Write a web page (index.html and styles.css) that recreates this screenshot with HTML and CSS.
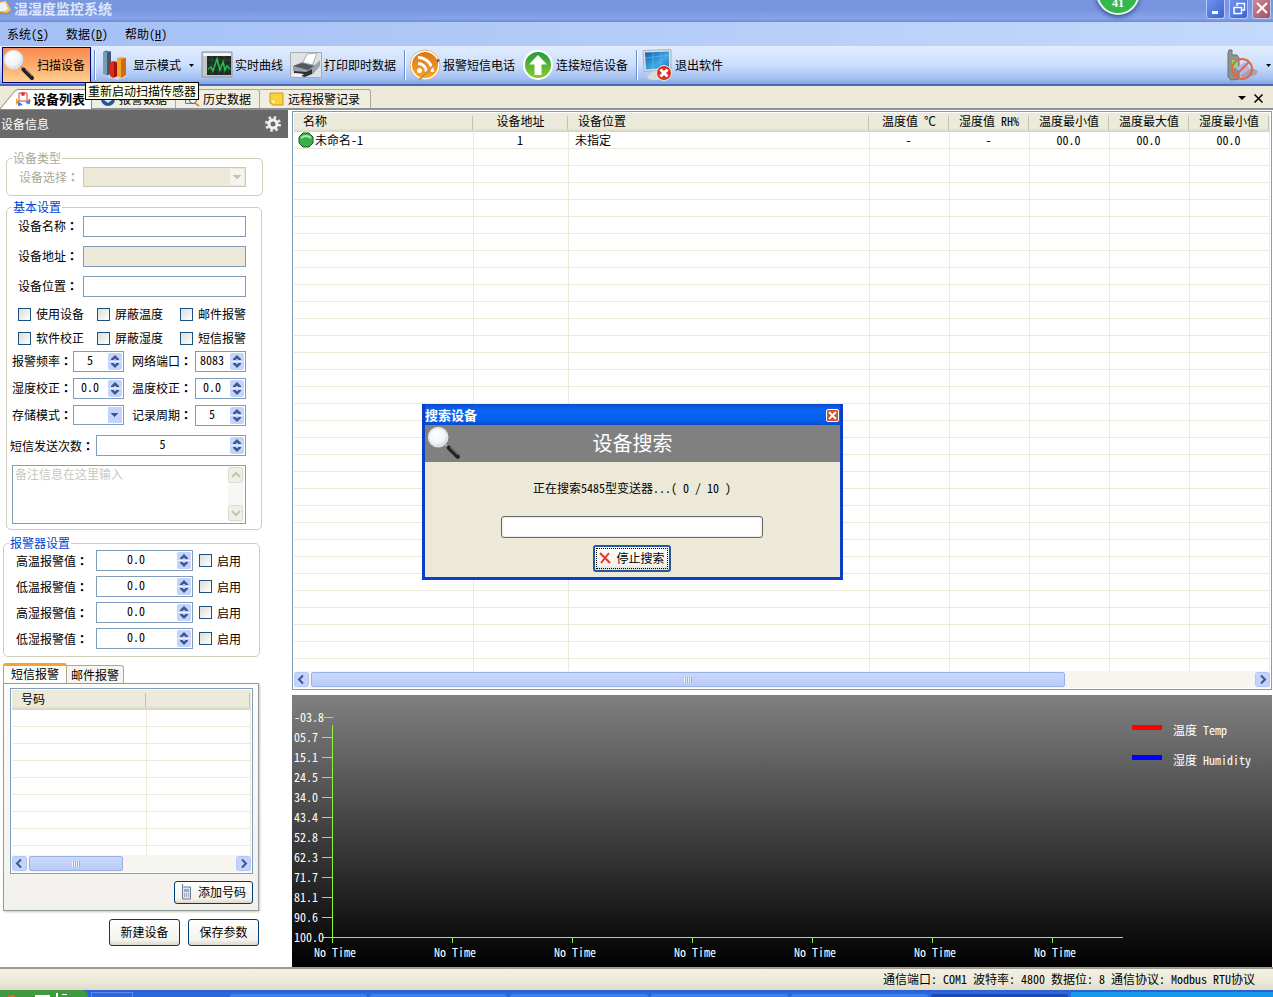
FILE: index.html
```html
<!DOCTYPE html>
<html lang="zh-CN">
<head>
<meta charset="utf-8">
<title>温湿度监控系统</title>
<link rel="stylesheet" href="styles.css">
</head>
<body>
<svg class="defs" aria-hidden="true">
  <defs>
    <radialGradient id="lens" cx=".4" cy=".35" r=".7"><stop offset="0" stop-color="#fff"/><stop offset=".7" stop-color="#f0f3f6"/><stop offset="1" stop-color="#c5cdd6"/></radialGradient>
    <linearGradient id="rssG" x2="0" y2="1"><stop offset="0" stop-color="#d9761a"/><stop offset="1" stop-color="#ffa51e"/></linearGradient>
    <linearGradient id="upG" x2="0" y2="1"><stop offset="0" stop-color="#1c9a3c"/><stop offset="1" stop-color="#8ccf2a"/></linearGradient>
    <linearGradient id="scrG" x2="1" y2="1"><stop offset="0" stop-color="#0d5fae"/><stop offset=".6" stop-color="#3fa9e6"/><stop offset="1" stop-color="#1b74bf"/></linearGradient>
    <symbol id="magnifier" viewBox="0 0 32 32">
      <path d="M17 17l4 4" stroke="#999" stroke-width="2"/>
      <path d="M20.500 20.500l8.500 8.500" stroke="#222" stroke-width="4" stroke-linecap="round"/>
      <path d="M22 20l7 7" stroke="#777" stroke-width="1"/>
      <circle cx="10.500" cy="10.500" r="9" fill="url(#lens)" stroke="#dfe3e8" stroke-width="1.500"/>
    </symbol>
    <symbol id="spin" viewBox="0 0 14 17">
      <rect width="14" height="17" rx="2" fill="#c3d3fb"/>
      <path d="M0 8.500h14" stroke="#e6edfd"/>
      <path d="M3 7V6l4-4 4 4v1H8.500L7 5.500 5.500 7zM3 10v1l4 4 4-4v-1H8.500L7 11.500 5.500 10z" fill="#3d5690"/>
    </symbol>
    <symbol id="left" viewBox="0 0 15 15"><rect x=".5" y=".5" width="14" height="14" rx="2" fill="#c3d3fb" stroke="#b4c6f5"/><path d="M9 3.500L5 7.500l4 4" fill="none" stroke="#3d5690" stroke-width="2"/></symbol>
    <symbol id="right" viewBox="0 0 15 15"><rect x=".5" y=".5" width="14" height="14" rx="2" fill="#c3d3fb" stroke="#b4c6f5"/><path d="M6 3.500l4 4-4 4" fill="none" stroke="#3d5690" stroke-width="2"/></symbol>
  </defs>
</svg>

<header class="titlebar">
  <svg class="app-icon" width="12" height="16" viewBox="0 0 12 16"><path d="M0 2l6-1 5 9-4 3H0z" fill="#f5c842"/><path d="M0 3l5-1 3 7-3 2H0z" fill="#e8f4ff"/><path d="M0 12l8 1 2-2v3H0z" fill="#c98a1c"/></svg>
  <h1>温湿度监控系统</h1>
  <span class="badge">41</span>
  <div class="win-buttons">
    <button aria-label="最小化"><svg width="18" height="18"><path d="M5 12.500h6" stroke="#fff" stroke-width="3"/></svg></button>
    <button aria-label="还原"><svg width="18" height="18"><path d="M7 6V3.500h7.500V10H12M4 7.500h7.500v6H4z" fill="none" stroke="#fff" stroke-width="1.500"/></svg></button>
    <button class="close" aria-label="关闭"><svg width="18" height="18"><path d="M4 3l10 10M14 3L4 13" stroke="#fff" stroke-width="2"/></svg></button>
  </div>
</header>

<nav class="menubar">
  <button>系统(<u>S</u>)</button>
  <button>数据(<u>D</u>)</button>
  <button>帮助(<u>H</u>)</button>
</nav>

<div class="toolbar">
  <button class="tool scan"><svg width="32" height="32"><use href="#magnifier"/></svg>扫描设备</button>
  <span class="sep"></span>
  <button class="tool"><svg width="32" height="32" viewBox="0 0 32 32">
    <path d="M4 26l14 5 11-4-12-6z" fill="#d5d8dc"/>
    <path d="M4 3l3-1.500 5 1v22l-4 2-4-2z" fill="#5d7b99"/><path d="M8 4l4-1.500v22l-4 2z" fill="#3f5873"/><path d="M4 3l4 1v22l-4-2z" fill="#7c9ab6"/>
    <path d="M11 13l4-1 3 1v14l-4 2-3-2z" fill="#e02818"/><path d="M15 14l3-1v14l-3 1.500z" fill="#9c1410"/>
    <path d="M18 9l4-1 5 1v17l-5 3-4-2z" fill="#f7a62c"/><path d="M22 10l5-1v17l-5 3z" fill="#cf6a16"/></svg>显示模式<svg class="drop" width="5" height="3"><path d="M0 0h5L2.500 3z"/></svg></button>
  <button class="tool"><svg width="32" height="32" viewBox="0 0 32 32">
    <path d="M1 3h30v25H1z" fill="#c3c6c9" stroke="#8e949a"/><path d="M2 4h28v3H2z" fill="#f4f4f4"/><path d="M6 7h24v19H6z" fill="#1f2b25"/>
    <path d="M6 11h24M6 16h24M6 21h24M11 7v19M17 7v19M23 7v19" stroke="#2d4a3a"/><path d="M7 20l3-2 2 4 4-12 3 11 3-8 2 8 2-4 3 3" fill="none" stroke="#28c04c" stroke-width="1.500"/></svg>实时曲线</button>
  <button class="tool"><svg width="32" height="32" viewBox="0 0 32 32">
    <path d="M.5 3.500h31v25H.5z" fill="#dfe3e6" stroke="#a7adb3"/><path d="M17 5l10-1-5 13-10-2z" fill="#fff" stroke="#aaa"/><path d="M3 17l9-4 13 3 5-5v6l-7 8-20-3z" fill="#9aa1a8"/><path d="M3 17l9-3 12 3-6 4z" fill="#53595f"/><path d="M4 22l12 1 6-3v5l-7 3-11-3z" fill="#2e3338"/><path d="M5 24l9 1-4 3-8-2z" fill="#fafafa"/></svg>打印即时数据</button>
  <span class="sep"></span>
  <button class="tool"><svg width="32" height="32" viewBox="0 0 32 32">
    <circle cx="16" cy="16" r="14" fill="url(#rssG)" stroke="#fff" stroke-width="2"/><circle cx="16" cy="16" r="15" fill="none" stroke="#dcb48c"/>
    <circle cx="10.500" cy="21.500" r="2.500" fill="#fff"/><path d="M9 14.500a8.500 8.500 0 0 1 8.500 8.500M9 8.500A14.500 14.500 0 0 1 23.500 23" fill="none" stroke="#fff" stroke-width="3"/><path d="M30 11L13 28l-3 3" stroke="#c98f58" stroke-width="2"/><path d="M28 10l3 1-3 3z" fill="#b33"/></svg>报警短信电话</button>
  <button class="tool"><svg width="32" height="32" viewBox="0 0 32 32">
    <circle cx="16" cy="16" r="14" fill="url(#upG)" stroke="#fff" stroke-width="2"/><path d="M16 6l9 9.500h-5.500V26h-7V15.500H7z" fill="#fff"/></svg>连接短信设备</button>
  <span class="sep"></span>
  <button class="tool"><svg width="32" height="32" viewBox="0 0 32 32">
    <path d="M2 1.500l28-1v20l-27 2z" fill="#d9dee2" stroke="#a6b1bb"/><path d="M4 3.500l24-1v16l-23 2z" fill="url(#scrG)"/><path d="M4 9l24-3M12 3v17M20 3v16" stroke="#7cc6f0" opacity=".5"/><path d="M12 22l-6 6q0 3 8 3h4l2-9z" fill="#d6dadd"/>
    <circle cx="23" cy="24" r="7.500" fill="#d6321f" stroke="#e9e9e9"/><path d="M19.500 20.500l7 7M26.500 20.500l-7 7" stroke="#fff" stroke-width="3"/></svg>退出软件</button>
  <button class="tool end" aria-label="报警开关"><svg width="32" height="32" viewBox="0 0 32 32">
    <path d="M3 1h3v5h5l2 3v21l-8 1-3-3V4z" fill="#8d9391" stroke="#6c716f"/><path d="M6 11h6v8H6z" fill="#8edc62"/><path d="M14 26l12-7 6 3-2 4-13 4z" fill="#a7a3ae"/><path d="M10 19l9-6 5 7-8 5z" fill="#c0b1dd"/>
    <circle cx="16" cy="20" r="10" fill="none" stroke="#dd6a4a" stroke-width="2"/><path d="M9 27l14-14" stroke="#dd6a4a" stroke-width="2"/></svg><svg class="drop" width="5" height="3"><path d="M0 0h5L2.500 3z"/></svg></button>
  <span class="tooltip" role="tooltip">重新启动扫描传感器</span>
</div>

<div class="tabs">
  <button class="tab active"><svg width="92" height="20" class="slope"><path d="M0 20L14 3Q16 .5 19 .5H89Q91.500 .5 91.500 3V20" fill="#fff" stroke="#8a867a"/></svg>
    <svg width="16" height="16"><path d="M4 2h8v8H4z" fill="#fff" stroke="#d04030"/><circle cx="8" cy="3" r="2" fill="#e33"/><path d="M1 7l3 4-3 3zM14 7l2 3-4 4z" fill="#f59a23"/><path d="M3 10l5 4-5 1zM10 12l5-4v5z" fill="#4a78e0"/></svg>设备列表</button>
  <button class="tab"><svg width="16" height="16"><circle cx="8" cy="8" r="7" fill="#24549c"/><path d="M4 9l4 3 4-3" fill="#dce8ff"/></svg>报警数据</button>
  <button class="tab"><svg width="16" height="16"><path d="M1.500 2.500h10v10h-10z" fill="#dbe6f4" stroke="#67819f"/><circle cx="9" cy="9" r="3.500" fill="#eef6ff" stroke="#555"/><path d="M11 12l4 3" stroke="#e08a20" stroke-width="2"/></svg>历史数据</button>
  <button class="tab last"><svg width="16" height="16"><path d="M1 2h13v12H4l-3-2z" fill="#f8d13c" stroke="#cf9a1a"/><path d="M2 9l4 1-1 3z" fill="#fff7c0"/></svg>远程报警记录</button>
  <div class="tab-tools">
    <button aria-label="标签列表"><svg width="8" height="4"><path d="M0 0h8L4 4z"/></svg></button>
    <button aria-label="关闭标签"><svg width="9" height="9"><path d="M.5 .5l8 8M8.500 .5l-8 8" stroke="#000" stroke-width="1.500"/></svg></button>
  </div>
</div>

<div class="content">
  <aside class="sidebar">
    <h2 class="side-head">设备信息<svg width="18" height="18" viewBox="0 0 18 18"><circle cx="9" cy="9" r="6.500" fill="none" stroke="#e8e8e8" stroke-width="3" stroke-dasharray="2.500 2.600"/><circle cx="9" cy="9" r="4" fill="none" stroke="#f2f2f2" stroke-width="3"/></svg></h2>

    <fieldset class="group type" disabled>
      <legend>设备类型</legend>
      <div class="line"><label for="kind">设备选择<i>：</i></label><select id="kind" class="combo"><option></option></select></div>
    </fieldset>

    <fieldset class="group basic">
      <legend>基本设置</legend>
      <div class="fields">
        <label for="name">设备名称<i>：</i></label><input id="name" class="box">
        <label for="addr">设备地址<i>：</i></label><input id="addr" class="box" disabled>
        <label for="loc">设备位置<i>：</i></label><input id="loc" class="box">
      </div>
      <div class="checks">
        <label><input type="checkbox">使用设备</label><label><input type="checkbox">屏蔽温度</label><label><input type="checkbox">邮件报警</label>
        <label><input type="checkbox">软件校正</label><label><input type="checkbox">屏蔽湿度</label><label><input type="checkbox">短信报警</label>
      </div>
      <div class="pairs">
        <label for="freq">报警频率<i>：</i></label><span class="spin"><input id="freq" value="5"><svg><use href="#spin"/></svg></span>
        <label for="port">网络端口<i>：</i></label><span class="spin"><input id="port" value="8083"><svg><use href="#spin"/></svg></span>
        <label for="hadj">湿度校正<i>：</i></label><span class="spin"><input id="hadj" value="0.0"><svg><use href="#spin"/></svg></span>
        <label for="tadj">温度校正<i>：</i></label><span class="spin"><input id="tadj" value="0.0"><svg><use href="#spin"/></svg></span>
        <label for="mode">存储模式<i>：</i></label><select id="mode" class="combo"><option></option></select>
        <label for="cycle">记录周期<i>：</i></label><span class="spin"><input id="cycle" value="5"><svg><use href="#spin"/></svg></span>
      </div>
      <div class="sms"><label for="count">短信发送次数<i>：</i></label><span class="spin"><input id="count" value="5"><svg><use href="#spin"/></svg></span></div>
      <div class="memo">
        <textarea aria-label="备注" placeholder="备注信息在这里输入"></textarea>
        <svg width="16" height="55"><path d="M0 0h16v55H0z" fill="#f8f7f3"/><rect x=".5" y=".5" width="14" height="15" rx="2" fill="#f0efe6" stroke="#dddbd0"/><rect x=".5" y="38.500" width="14" height="15" rx="2" fill="#f0efe6" stroke="#dddbd0"/><path d="M4 10l4-4 4 4M4 44l4 4 4-4" fill="none" stroke="#c5c3b5" stroke-width="2"/></svg>
      </div>
    </fieldset>

    <fieldset class="group alarm">
      <legend>报警器设置</legend>
      <div class="alarms">
        <label for="ht">高温报警值<i>：</i></label><span class="spin"><input id="ht" value="0.0"><svg><use href="#spin"/></svg></span><label class="on"><input type="checkbox">启用</label>
        <label for="lt">低温报警值<i>：</i></label><span class="spin"><input id="lt" value="0.0"><svg><use href="#spin"/></svg></span><label class="on"><input type="checkbox">启用</label>
        <label for="hh">高湿报警值<i>：</i></label><span class="spin"><input id="hh" value="0.0"><svg><use href="#spin"/></svg></span><label class="on"><input type="checkbox">启用</label>
        <label for="lh">低湿报警值<i>：</i></label><span class="spin"><input id="lh" value="0.0"><svg><use href="#spin"/></svg></span><label class="on"><input type="checkbox">启用</label>
      </div>
    </fieldset>

    <div class="subtabs"><button class="on">短信报警</button><button>邮件报警</button></div>
    <section class="panel">
      <div class="list">
        <div class="list-body"><table class="numbers"><thead><tr><th>号码</th><th></th></tr></thead><tbody><tr class="fill"><td></td><td></td></tr></tbody></table></div>
        <div class="hscroll"><svg width="15" height="15"><use href="#left"/></svg><span class="track"><span class="thumb short"></span></span><svg width="15" height="15"><use href="#right"/></svg></div>
      </div>
      <button class="btn add"><svg width="11" height="16" viewBox="0 0 11 16"><path d="M1.500 0v15h8V3h-7" fill="#dfe6ee" stroke="#6f7b8a"/><path d="M3 5h5v3H3z" fill="#7db3ea"/><path d="M3 10h1m1 0h1m1 0h1M3 12h1m1 0h1m1 0h1" stroke="#667"/></svg>添加号码</button>
    </section>
    <div class="actions"><button class="btn">新建设备</button><button class="btn">保存参数</button></div>
  </aside>

  <main class="main">
    <div class="list devices">
      <div class="list-body">
        <table class="grid">
          <colgroup><col class="c-name"><col class="c-addr"><col><col class="c-val"><col class="c-val"><col class="c-val"><col class="c-val"><col class="c-val"></colgroup>
          <thead><tr><th class="l">名称</th><th>设备地址</th><th class="l">设备位置</th><th>温度值 ℃</th><th>湿度值 RH%</th><th>温度最小值</th><th>温度最大值</th><th>湿度最小值</th></tr></thead>
          <tbody>
            <tr><td class="l first"><svg width="16" height="16"><path d="M5 1h6l4 4v6l-4 4H5l-4-4V5z" fill="#3aae4c" stroke="#1b5c28"/><path d="M3 6q5-4 10 0" stroke="#a8ecae" stroke-width="2" fill="none"/></svg>未命名-1</td><td>1</td><td class="l">未指定</td><td>-</td><td>-</td><td>00.0</td><td>00.0</td><td>00.0</td></tr>
            <tr class="fill"><td></td><td></td><td></td><td></td><td></td><td></td><td></td><td></td></tr>
          </tbody>
        </table>
      </div>
      <div class="hscroll"><svg width="15" height="15"><use href="#left"/></svg><span class="track"><span class="thumb"></span></span><svg width="15" height="15"><use href="#right"/></svg></div>
    </div>

    <section class="chart">
      <svg class="plot" width="100%" height="272">
        <g fill="#8ef53c">
          <path d="M40 30h1v218h-1zM30 242h801v1H30z"/>
          <path d="M32 22h9v1h-9zM30 42h10v1H30zM30 62h10v1H30zM30 82h10v1H30zM30 102h10v1H30zM30 122h10v1H30zM30 142h10v1H30zM30 162h10v1H30zM30 182h10v1H30zM30 202h10v1H30zM30 222h10v1H30z"/>
          <path d="M160 242h1v6h-1zM280 242h1v6h-1zM400 242h1v6h-1zM520 242h1v6h-1zM640 242h1v6h-1zM760 242h1v6h-1z"/>
        </g>
        <g class="axis">
          <text x="2" y="27">-03.8</text><text x="2" y="47">05.7</text><text x="2" y="67">15.1</text><text x="2" y="87">24.5</text><text x="2" y="107">34.0</text><text x="2" y="127">43.4</text><text x="2" y="147">52.8</text><text x="2" y="167">62.3</text><text x="2" y="187">71.7</text><text x="2" y="207">81.1</text><text x="2" y="227">90.6</text><text x="2" y="247">100.0</text>
          <text x="22" y="262">No Time</text><text x="142" y="262">No Time</text><text x="262" y="262">No Time</text><text x="382" y="262">No Time</text><text x="502" y="262">No Time</text><text x="622" y="262">No Time</text><text x="742" y="262">No Time</text>
        </g>
      </svg>
      <ul class="legend"><li class="temp">温度 Temp</li><li class="humid">湿度 Humidity</li></ul>
    </section>
  </main>
</div>

<footer class="status"><span>通信端口: COM1 波特率: 4800 数据位: 8 通信协议: Modbus RTU协议</span></footer>
<div class="taskbar"><span class="start"><svg width="88" height="7"><path d="M7 7q4-4 8-1v1z" fill="#e8622a"/><path d="M35 5h15v2H35zM56 3h2v4h-2zM62 4h5v1h-5z" fill="#fff"/></svg></span><span class="quick"></span><span class="task"></span><span class="task"></span><span class="task"></span><span class="task"></span><span class="task"></span><span class="task current"></span><span class="tray"></span></div>

<section class="dialog" role="dialog" aria-labelledby="dlg">
  <header><h2 id="dlg">搜索设备</h2><button aria-label="关闭"><svg width="13" height="13"><path d="M3 3l7 7M10 3l-7 7" stroke="#fff" stroke-width="2"/></svg></button></header>
  <div class="banner"><svg width="34" height="34"><use href="#magnifier"/></svg><h3>设备搜索</h3></div>
  <div class="dialog-body">
    <p>正在搜索5485型变送器...( 0 / 10 )</p>
    <div class="progress" role="progressbar" aria-valuenow="0" aria-valuemax="10"></div>
    <button class="btn stop"><svg width="12" height="12"><path d="M1 1l10 10M10 1L2 11" stroke="#e03a22" stroke-width="2"/></svg>停止搜索</button>
  </div>
</section>
</body>
</html>
```

FILE: styles.css
```css
* { box-sizing: border-box; }
body {
  margin: 0; height: 100vh; display: flex; flex-direction: column; overflow: hidden;
  position: relative; background: #fff; color: #000;
  font: 12px/14px "Noto Sans Mono CJK SC", "Noto Sans CJK SC", sans-serif;
}
button, input, select, textarea { font: inherit; color: inherit; margin: 0; }
button { padding: 0; border: 0; background: none; white-space: nowrap; }
h1, h2, h3, p, ul { margin: 0; padding: 0; font: inherit; }
svg { display: block; flex: none; }
label { white-space: nowrap; }
label i { font-style: normal; font-weight: bold; font-family: "Noto Sans CJK TC", sans-serif; -webkit-locale: "zh-TW"; }
.defs { position: absolute; width: 0; height: 0; }

/* window frame */
.titlebar {
  flex: none; height: 22px; display: flex; align-items: flex-start; position: relative;
  background: linear-gradient(#7b96e0, #7994de 40%, #86a4ea 85%, #7088d2);
}
.titlebar h1 { flex: 1; margin-left: 2px; font-size: 14px; line-height: 16px; font-weight: bold; color: #dce6fc; }
.win-buttons { display: flex; gap: 4px; padding-right: 2px; }
.win-buttons button { width: 19px; height: 19px; border: 1px solid #b5c8f6; border-top: 0; border-radius: 0 0 3px 3px; background: linear-gradient(135deg, #6f93ec, #3a62d4); }
.win-buttons .close { background: linear-gradient(135deg, #c98a98, #a84f5e); }
.badge {
  position: absolute; right: 133px; top: -30px; width: 44px; height: 45px; padding-top: 24px;
  border-radius: 50%; border: 2px solid #e8f4ea; background: #35b84b; color: #fff;
  font: bold 12px/14px "Liberation Serif", serif; text-align: center; box-shadow: 0 2px 5px #33508f;
}
.menubar { flex: none; height: 24px; display: flex; gap: 17px; padding-left: 7px; background: linear-gradient(90deg, #a3bff5, #c4d9fb); }

.toolbar {
  flex: none; height: 40px; display: flex; align-items: center; gap: 7px; padding: 0 2px; position: relative;
  background: linear-gradient(#e1edfe, #cbdefb 50%, #a4c1f2 85%, #7fa2e2); border-bottom: 2px solid #496bb5;
}
.tool { display: flex; align-items: center; gap: 2px; height: 36px; }
.scan { width: 89px; margin-right: -5px; border: 1px solid #000080; background: linear-gradient(#f98b50, #fdb272 60%, #ffd08e); }
.sep { width: 2px; height: 30px; margin: 0 -4px 0 1px; border-left: 1px solid #6a8ccb; border-right: 1px solid #fff; }
.drop { margin-left: 6px; }
.end { margin-left: auto; }
.tooltip { position: absolute; left: 85px; top: 36px; z-index: 3; padding: 0 2px 1px; border: 1px solid #000; background: #ffffe1; white-space: nowrap; line-height: 15px; }

.tabs { flex: none; height: 24px; display: flex; align-items: flex-end; background: #ece9d8; border-bottom: 2px solid #8b9096; }
.tab { display: flex; align-items: center; gap: 3px; height: 19px; padding: 0 8px; border: 1px solid #aca899; border-left: 0; border-bottom: 0; border-radius: 0 3px 0 0; background: #f0eee1; }
.tab.active { position: relative; z-index: 0; width: 92px; padding: 0 0 0 15px; border: 0; font-size: 13px; font-weight: bold; background: none; gap: 2px; }
.slope { position: absolute; left: 0; top: 0; z-index: -1; }
.tab.last { padding: 0 10px 0 9px; }
.tab-tools { margin-left: auto; display: flex; align-items: center; gap: 8px; height: 20px; padding-right: 10px; }

/* sidebar */
.content { flex: 1; min-height: 0; display: flex; gap: 4px; padding-right: 1px; }
.sidebar { width: 288px; flex: none; }
.side-head { display: flex; align-items: center; justify-content: space-between; height: 28px; padding: 0 6px 0 1px; background: #696969; color: #fff; }
.group { margin: 0; padding: 0 5px; border: 1px solid #d0cdbb; border-radius: 5px; min-width: 0; }
.group legend { padding: 0 1px; line-height: 14px; color: #0046d5; }
.type { width: 257px; height: 45px; margin: 13px 0 0 6px; color: #aca899; }
.type legend { color: #aca899; }
.line { display: flex; align-items: center; padding: 2px 0 0 7px; }
.line label { width: 64px; }
.line .combo { width: 163px; border-color: #c9c7ba; background-color: #ece9d8; }
.combo {
  height: 20px; border: 1px solid #7f9db9; border-radius: 0; appearance: none; background: #fff;
  background-image: linear-gradient(45deg, transparent 50%, #3d5690 50%), linear-gradient(-45deg, transparent 50%, #3d5690 50%), linear-gradient(#c3d3fb, #c3d3fb);
  background-size: 4px 4px, 4px 4px, 14px 16px; background-position: right 8px top 7px, right 4px top 7px, right 1px top 1px; background-repeat: no-repeat;
}
.line .combo { opacity: 1; background-image: linear-gradient(45deg, transparent 50%, #c5c3b5 50%), linear-gradient(-45deg, transparent 50%, #c5c3b5 50%), linear-gradient(#f5f4ee, #f5f4ee); }
.basic { width: 256px; margin: 4px 0 0 6px; padding-bottom: 5px; }
.fields { display: grid; grid-template-columns: 65px 163px; gap: 9px 0; align-items: center; padding: 2px 0 0 6px; }
.fields label { padding-bottom: 2px; }
.box { width: 100%; height: 21px; border: 1px solid #7f9db9; background: #fff; }
.box:disabled { background: #ece9d8; }
.checks { display: grid; grid-template-columns: 79px 83px 70px; grid-auto-rows: 24px; align-items: center; padding: 5px 0 0 6px; }
.checks label, .alarms .on { display: flex; align-items: center; gap: 5px; }
input[type=checkbox] { appearance: none; flex: none; width: 13px; height: 13px; border: 1px solid #1c5180; background: linear-gradient(135deg, #dcdcd7, #fff); }
.pairs { display: grid; grid-template-columns: 61px 51px 8px 63px 51px; gap: 6px 0; align-items: start; padding-top: 1px; }
.pairs label { padding-top: 3px; }
.pairs > :nth-child(4n+3) { grid-column: 4; }
.spin { position: relative; display: block; height: 21px; }
.spin input { width: 100%; height: 21px; padding: 0 17px 4px 0; border: 1px solid #7f9db9; background: #fff; text-align: center; }
.spin svg { position: absolute; right: 2px; top: 2px; width: 14px; height: 17px; }
.sms { display: grid; grid-template-columns: 84px 150px; align-items: center; padding-top: 9px; }
.sms label { margin-left: -2px; }
.memo { display: flex; height: 59px; width: 234px; margin-top: 9px; padding: 1px; border: 1px solid #7f9db9; }
.memo textarea { flex: 1; min-width: 0; padding: 0 1px; border: 0; outline: 0; resize: none; background: none; }
.memo textarea::placeholder { color: #c8c8c0; }
.alarm { width: 257px; margin: 6px 0 0 3px; padding-bottom: 7px; }
.alarms { display: grid; grid-template-columns: 80px 97px 6px 1fr; gap: 5px 0; align-items: center; padding-left: 7px; }
.alarms .on { grid-column: 4; }

.subtabs { display: flex; align-items: flex-end; height: 20px; margin: 6px 0 0 3px; }
.subtabs button { width: 57px; height: 18px; border: 1px solid #aca899; border-left: 0; border-bottom: 0; border-radius: 0 3px 0 0; background: #f6f5f0; }
.subtabs .on { width: 64px; height: 20px; padding-bottom: 2px; border: 1px solid #aca899; border-top: 3px solid #f0a62c; border-bottom: 0; border-radius: 3px 3px 0 0; background: #fcfcfb; }
.panel { width: 256px; margin-left: 3px; padding: 4px 5px 6px 6px; border: 1px solid #919b9c; box-shadow: 1px 1px 2px #c9c6b8; background: linear-gradient(#fcfcfb, #f2f1ec); display: flex; flex-direction: column; gap: 7px; }
.panel .list { height: 186px; }
.btn { display: inline-flex; align-items: center; justify-content: center; height: 27px; width: 71px; padding-bottom: 2px; border: 1px solid #003c74; border-radius: 3px; background: linear-gradient(#fff, #f3f2ec 80%, #dcd8ca); }
.btn.add { width: 79px; height: 23px; gap: 6px; align-self: flex-end; }
.actions { display: flex; justify-content: flex-end; gap: 8px; padding: 8px 29px 0 0; }

/* list views */
.list { display: flex; flex-direction: column; border: 1px solid #7f9db9; padding: 1px; background: #fff; }
.list-body { flex: 1; min-height: 0; overflow: hidden; }
.list table { width: 100%; height: 100%; border-collapse: separate; border-spacing: 0; table-layout: fixed; }
.list th { height: 19px; padding: 0 2px 3px 0; font-weight: normal; background: linear-gradient(90deg, #c5c2b2, #c5c2b2) right 1px center / 1px 14px no-repeat, linear-gradient(#ebeadb 80%, #d6d2c2); }
.list td { height: 17px; padding: 0 2px 0 0; text-align: center; line-height: 14px; border-right: 1px solid #ece9d8; border-bottom: 1px solid #ece9d8; }
.list .l { text-align: left; padding-left: 9px; }
.list td.l { padding-left: 6px; }
.list td.first { display: flex; align-items: center; gap: 1px; padding-left: 4px; }
.list .fill td { height: auto; border-bottom: 0; background: repeating-linear-gradient(transparent 0 16px, #ece9d8 16px 17px); }
.list .numbers th:first-child { width: 135px; height: 20px; text-align: left; padding-left: 9px; }
.c-name { width: 180px; }
.c-addr { width: 95px; }
.c-val { width: 80px; }
.hscroll { flex: none; display: flex; align-items: center; gap: 2px; height: 17px; background: #f6f5f0; }
.track { flex: 1; }
.thumb {
  display: block; width: 80%; height: 15px; border: 1px solid #98b1e4; border-radius: 2px;
  background: repeating-linear-gradient(90deg, #eef4fe 0 1px, #8cb0f8 1px 2px) center / 8px 6px no-repeat, linear-gradient(#cad8fd, #bacbf8);
}
.thumb.short { width: 46%; }

.main { flex: 1; min-width: 0; display: flex; flex-direction: column; gap: 5px; padding-top: 1px; }
.devices { flex: 1; min-height: 0; }
.chart { flex: none; position: relative; background: linear-gradient(#808080, #000); color: #fff; }
.axis { fill: #fff; }
.legend { position: absolute; right: 21px; top: 28px; display: grid; gap: 16px; list-style: none; }
.legend li { display: flex; align-items: center; gap: 11px; }
.legend li::before { content: ""; width: 30px; height: 5px; margin-bottom: 6px; background: #f00; }
.legend .humid::before { background: #00f; }

.status { flex: none; height: 23px; display: flex; align-items: center; justify-content: flex-end; padding: 0 18px 2px 0; border-top: 2px solid #9f9c8c; background: linear-gradient(#f2f0e4, #ece9d8 60%, #e0dcc8); white-space: pre; }
.taskbar { flex: none; height: 7px; display: flex; gap: 3px; border-top: 2px solid #2a62cf; background: #2a68df; }
.start { width: 88px; height: 7px; margin-top: -2px; background: #3f9a3f; border-radius: 0 6px 0 0; }
.quick { width: 42px; margin-right: 94px; border: 1px solid #5b8bea; border-bottom: 0; }
.task { flex: 1; margin-top: 2px; background: #3d80f0; border-radius: 3px 3px 0 0; }
.task.current { background: #1c49b4; }
.tray { width: 202px; background: #1499ea; }

/* search dialog */
.dialog { position: absolute; left: 422px; top: 404px; z-index: 5; width: 421px; border: 3px solid #0a3fc8; border-top: 0; background: #ece9d8; }
.dialog > header { display: flex; align-items: center; justify-content: space-between; height: 21px; padding: 2px 1px 0 0; background: linear-gradient(#0a4fd0, #0a63f2 30%, #0560f0 80%, #0848c8); color: #fff; }
.dialog > header h2 { padding-bottom: 2px; font-size: 13px; font-weight: bold; }
.dialog > header button { border: 1px solid #fff; border-radius: 2px; background: #d9502c; width: 13px; height: 13px; }
.dialog > header button svg { margin: -1px; }
.banner { position: relative; display: flex; align-items: center; justify-content: center; height: 37px; padding-bottom: 2px; background: #808080; color: #fff; }
.banner svg { position: absolute; left: 2px; top: 1px; }
.banner h3 { font-size: 20px; line-height: 24px; }
.dialog-body { display: flex; flex-direction: column; align-items: center; padding: 19px 1px 5px 0; }
.progress { width: 262px; height: 22px; margin: 21px 0 7px; border: 1px solid #686868; border-radius: 3px; background: #fff; box-shadow: inset 0 0 2px #bbb; }
.stop { width: 78px; gap: 5px; border: 2px solid #235a9b; outline: 1px dotted #000; outline-offset: -4px; }
```
